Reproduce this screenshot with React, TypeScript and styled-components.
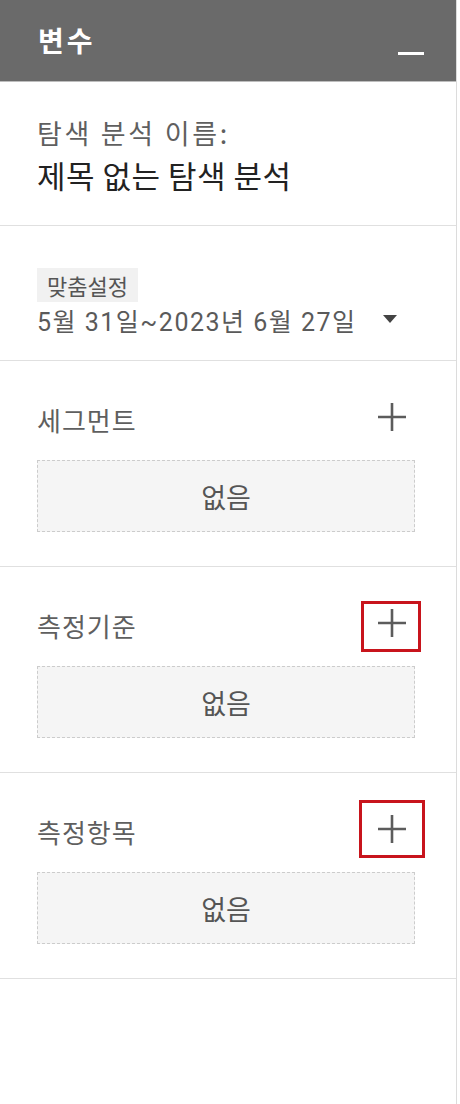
import React from "react";
import styled, { createGlobalStyle } from "styled-components";

const GlobalStyle = createGlobalStyle`
  html, body {
    margin: 0;
    padding: 0;
    background: #ffffff;
  }
  body {
    font-family: "Noto Sans CJK KR", "Noto Sans", sans-serif;
  }
  * {
    box-sizing: border-box;
  }
`;

type Mark = { top: number; right: number; bottom: number; left: number };

const sections: { title: string; mark?: Mark }[] = [
  { title: "세그먼트" },
  { title: "측정기준", mark: { top: -7, right: -14, bottom: -14, left: -16 } },
  { title: "측정항목", mark: { top: -14, right: -18, bottom: -14, left: -18 } },
];

const App: React.FC = () => {
  return (
    <>
      <GlobalStyle />
      <Panel>
        <Header>
          <HeaderTitle>변수</HeaderTitle>
          <Collapse aria-label="접기" />
        </Header>

        <Section $pad="35px 41px 32px 37px">
          <FieldLabel $size={27} $spacing={2.7}>
            탐색 분석 이름:
          </FieldLabel>
          <AnalysisName>제목 없는 탐색 분석</AnalysisName>
        </Section>

        <Section $pad="42px 41px 22px 37px">
          <Chip>맞춤설정</Chip>
          <DateRow>
            <DateText>5월 31일~2023년 6월 27일</DateText>
            <Caret />
          </DateRow>
        </Section>

        {sections.map((s) => (
          <Section key={s.title} $pad="36px 41px 34px 37px">
            <SectionRow>
              <FieldLabel $size={26} $spacing={1}>
                {s.title}
              </FieldLabel>
              <AddButton aria-label={`${s.title} 추가`}>
                <svg width="30" height="30" viewBox="0 0 30 30">
                  <path d="M15 1v28M1 15h28" stroke="#5c5c5c" strokeWidth="2.6" />
                </svg>
                {s.mark && <Highlight $m={s.mark} />}
              </AddButton>
            </SectionRow>
            <EmptyBox>없음</EmptyBox>
          </Section>
        ))}
      </Panel>
    </>
  );
};

const Panel = styled.div`
  width: 457px;
  min-height: 100vh;
  background: #ffffff;
  border-right: 1px solid #dcdcdc;
  display: flex;
  flex-direction: column;
`;

const Header = styled.div`
  height: 82px;
  background: #6a6a6a;
  display: flex;
  justify-content: space-between;
  align-items: flex-start;
  padding: 24px 32px 0 38px;
  border-bottom: 1px solid #bdbdbd;
`;

const HeaderTitle = styled.h2`
  margin: 0;
  color: #ffffff;
  font-size: 28px;
  line-height: 32px;
  letter-spacing: 3px;
  font-weight: 700;
`;

const Collapse = styled.button`
  margin-top: 28px;
  width: 26px;
  height: 3px;
  padding: 0;
  border: none;
  background: #ffffff;
`;

const Section = styled.div<{ $pad: string }>`
  padding: ${(p) => p.$pad};
  border-bottom: 1px solid #e0e0e0;
  display: flex;
  flex-direction: column;
`;

const FieldLabel = styled.div<{ $size: number; $spacing: number }>`
  font-size: ${(p) => p.$size}px;
  letter-spacing: ${(p) => p.$spacing}px;
  line-height: 32px;
  color: #5f5f5f;
`;

const AnalysisName = styled.div`
  margin-top: 8px;
  font-size: 31px;
  line-height: 36px;
  letter-spacing: 0.5px;
  color: #222222;
`;

const Chip = styled.span`
  align-self: flex-start;
  height: 34px;
  padding: 0 10px;
  background: #f1f1f1;
  font-size: 22px;
  line-height: 34px;
  color: #555555;
`;

const DateRow = styled.div`
  margin-top: 6px;
  display: flex;
  align-items: center;
`;

const DateText = styled.span`
  font-family: Roboto, "Noto Sans CJK KR", sans-serif;
  font-size: 25px;
  line-height: 30px;
  letter-spacing: 1.5px;
  color: #5a5a5a;
`;

const Caret = styled.span`
  margin-left: 26px;
  margin-top: -8px;
  width: 0;
  height: 0;
  border-left: 7.5px solid transparent;
  border-right: 7.5px solid transparent;
  border-top: 8px solid #444444;
`;

const SectionRow = styled.div`
  height: 46px;
  display: flex;
  align-items: center;
  justify-content: space-between;
`;

const AddButton = styled.button`
  position: relative;
  width: 30px;
  height: 30px;
  margin: 0 8px 6px 0;
  padding: 0;
  border: none;
  background: transparent;
  display: flex;
  cursor: pointer;
`;

const Highlight = styled.span<{ $m: Mark }>`
  position: absolute;
  top: ${(p) => p.$m.top}px;
  right: ${(p) => p.$m.right}px;
  bottom: ${(p) => p.$m.bottom}px;
  left: ${(p) => p.$m.left}px;
  border: 3px solid #c8141c;
  pointer-events: none;
`;

const EmptyBox = styled.div`
  margin-top: 17px;
  height: 72px;
  border: 1px dashed #cccccc;
  background: #f5f5f5;
  display: flex;
  align-items: center;
  justify-content: center;
  font-size: 27px;
  color: #555555;
`;

export default App;
